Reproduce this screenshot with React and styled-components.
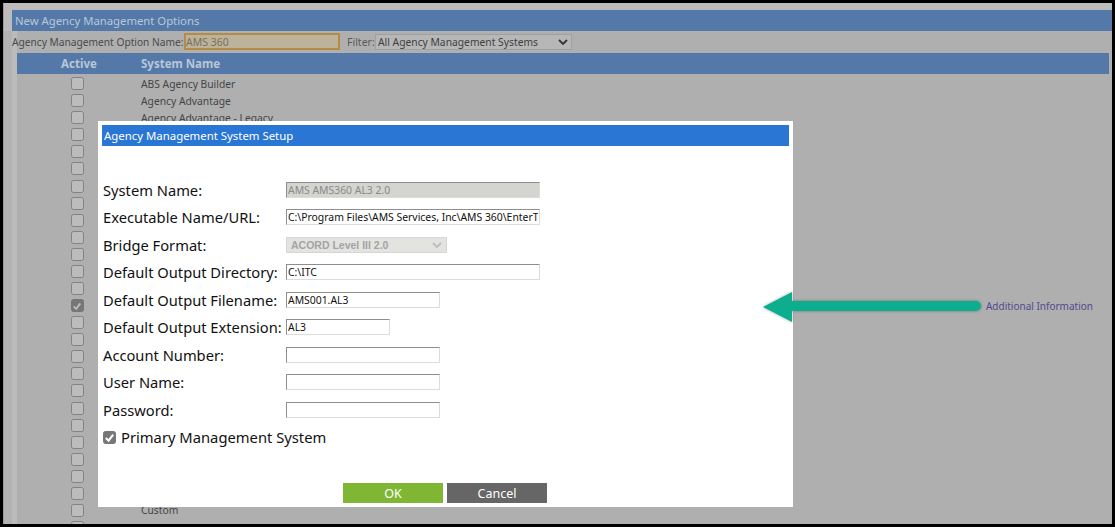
import React from 'react';
import styled, { createGlobalStyle } from 'styled-components';

const Global = createGlobalStyle`
  html, body { margin: 0; padding: 0; background: #000; }
  * { box-sizing: border-box; }
`;
const UI = `"Noto Sans", "Open Sans", sans-serif`;

const Frame = styled.div`
  position: relative; width: 1115px; height: 527px; overflow: hidden;
  background: #000; padding: 3px 3px 3px 3px; font-family: ${UI};
`;
const Page = styled.div`
  height: 100%; overflow: hidden; background: #afafaf;
  display: flex; flex-direction: column;
  border-left: 1px solid #9c9c9c;
`;
const TitleWrap = styled.div`
  flex: none; background: #bcbcbc; padding: 7px 0 0 8px;
`;
const TitleBar = styled.div`
  height: 21px; background: #5479a8; color: #b9c6d8; font-size: 11.3px;
  line-height: 21px; padding-left: 3px;
`;
const Body = styled.div`
  flex: 1; min-height: 0; overflow: hidden;
  background: linear-gradient(to right, #b3b3b3 0 8px, #bbb 8px 13px, #afafaf 13px);
`;
const OptionRow = styled.div`
  height: 22px; display: flex; align-items: center; padding: 0 0 1px 8px;
  color: #4a4a4a; font-size: 10.2px;
`;
const OptionLabel = styled.label` width: 172px; white-space: nowrap; `;
const NameInput = styled.input`
  width: 156px; height: 17px; border: 2px solid #b58c46; background: #bcb39a;
  color: #787060; font: 10.5px ${UI}; padding: 0; outline: none;
`;
const FilterLabel = styled.label` margin-left: 7px; width: 28px; color: #5a5a5a; font-size: 10.5px; `;
const SelectWrap = styled.span`
  position: relative; display: inline-flex;
`;
const Chevron = styled.svg`
  position: absolute; top: 5px; right: ${p => p.$right}px; pointer-events: none;
`;
const FilterSelect = styled.select`
  appearance: none; width: 197px; height: 16px; border: 1px solid #a0a0a0; background: #b7b7b7;
  color: #3f3f3f; font: 10.3px ${UI}; padding: 0 0 0 2px; border-radius: 0; outline: none;
`;
const TableHead = styled.div`
  display: grid; grid-template-columns: 124px 1fr; height: 21px; margin: 0 3px 0 13px;
  background: #5479a8; color: #b9c6d8; font-size: 11.5px; font-weight: 700; line-height: 21px;
`;
const ActiveHead = styled.div` text-align: center; `;
const Rows = styled.div` padding-top: 1px; `;
const Row = styled.div`
  display: grid; grid-template-columns: 124px 1fr auto; align-items: center;
  height: 17.08px; margin: 0 3px 0 13px; color: #454545; font-size: 10.3px;
`;
const BoxCell = styled.div` display: flex; justify-content: center; margin-left: -4px; `;
const Box = styled.span`
  width: 13px; height: 13px; border-radius: 2.5px; display: flex; align-items: center; justify-content: center;
  background: ${p => (p.$on ? '#777' : '#bcbcbc')};
  border: 1px solid ${p => (p.$on ? '#777' : '#828282')};
`;
const Info = styled.a`
  color: #4f4a8f; font-size: 10px; padding: 1px 16px 0 0; text-decoration: none;
`;

const Dialog = styled.div`
  position: absolute; left: 98px; top: 121px; width: 695px; height: 386px;
  background: #fff; padding: 4px 4px 0 4px; display: flex; flex-direction: column;
`;
const DialogHead = styled.div`
  height: 21px; background: #2a76d5; color: #fff; font-size: 11.4px; line-height: 21px; padding-left: 2px;
`;
const Form = styled.div`
  padding: 30px 0 0 1px; display: flex; flex-direction: column; flex: 1;
`;
const FormRow = styled.div`
  height: 27.5px; display: flex; align-items: center; color: #111; font-size: 14.7px;
`;
const FormLabel = styled.label` width: 183px; white-space: nowrap; `;
const Field = styled.input`
  width: ${p => p.$w}px; height: 16px; background: ${p => (p.disabled ? '#d4d4d0' : '#fff')};
  border: 1px solid #dcdcdc; border-top-color: #8e8e8e; border-left-color: #8e8e8e;
  color: ${p => (p.disabled ? '#8a8a8a' : '#111')}; font: 10.4px ${UI}; padding: 0 1px; outline: none;
  opacity: 1;
`;
const BridgeSelect = styled.select`
  appearance: none; width: 161px; height: 16px; background: #e3e3e0; border: 1px solid #d6d6d6; color: #a4a4a4;
  font: 700 10.5px "Liberation Sans", sans-serif; padding: 0 0 0 4px; border-radius: 0; opacity: 1;
`;
const CheckRow = styled.div`
  height: 27.5px; display: flex; align-items: center; gap: 5px; color: #111; font-size: 14.75px;
`;
const Buttons = styled.div`
  display: flex; gap: 4px; margin: auto 0 0 240px; padding-bottom: 4px;
`;
const Btn = styled.button`
  width: 100px; height: 20px; border: none; color: #fff; font: 12.5px ${UI}; padding: 0;
  background: ${p => (p.$ok ? '#7fb735' : '#666')};
`;
const Arrow = styled.svg`
  position: absolute; left: 755px; top: 285px; overflow: visible;
`;

const names = { 0: 'ABS Agency Builder', 1: 'Agency Advantage', 2: 'Agency Advantage - Legacy', 25: 'Custom' };
const rows = Array.from({ length: 27 }, (_, i) => i);

const Check = ({ c, s }) => (
  <svg width={s} height={s} viewBox="0 0 12 12">
    <path d="M2 6.5 L5 9.5 L10 2.8" fill="none" stroke={c} strokeWidth="2.2" />
  </svg>
);

const Chev = ({ c, right }) => (
  <Chevron $right={right} width="10" height="6" viewBox="0 0 10 6">
    <path d="M1 1 L5 5 L9 1" fill="none" stroke={c} strokeWidth="1.8" />
  </Chevron>
);

const fields = [
  ['Executable Name/URL:', 'C:\\Program Files\\AMS Services, Inc\\AMS 360\\EnterT', 254],
  null,
  ['Default Output Directory:', 'C:\\ITC', 254],
  ['Default Output Filename:', 'AMS001.AL3', 154],
  ['Default Output Extension:', 'AL3', 104],
  ['Account Number:', '', 154],
  ['User Name:', '', 154],
  ['Password:', '', 154],
];

export default function App() {
  return (
    <Frame>
      <Global />
      <Page>
        <TitleWrap><TitleBar>New Agency Management Options</TitleBar></TitleWrap>
        <Body>
          <OptionRow>
            <OptionLabel>Agency Management Option Name:</OptionLabel>
            <NameInput defaultValue="AMS 360" />
            <FilterLabel>Filter:</FilterLabel>
            <SelectWrap>
              <FilterSelect defaultValue="all"><option value="all">All Agency Management Systems</option></FilterSelect>
              <Chev c="#333" right={4} />
            </SelectWrap>
          </OptionRow>
          <TableHead><ActiveHead>Active</ActiveHead><div>System Name</div></TableHead>
          <Rows>
            {rows.map(i => (
              <Row key={i}>
                <BoxCell><Box $on={i === 13}>{i === 13 && <Check c="#bdbdbd" s={10} />}</Box></BoxCell>
                <div>{names[i] || ''}</div>
                {i === 13 ? <Info href="#">Additional Information</Info> : <span />}
              </Row>
            ))}
          </Rows>
        </Body>
      </Page>
      <Dialog>
        <DialogHead>Agency Management System Setup</DialogHead>
        <Form>
          <FormRow>
            <FormLabel>System Name:</FormLabel>
            <Field $w={254} disabled defaultValue="AMS AMS360 AL3 2.0" />
          </FormRow>
          {fields.map((f, i) => f ? (
            <FormRow key={i}>
              <FormLabel>{f[0]}</FormLabel>
              <Field $w={f[2]} defaultValue={f[1]} />
            </FormRow>
          ) : (
            <FormRow key={i}>
              <FormLabel>Bridge Format:</FormLabel>
              <SelectWrap>
                <BridgeSelect disabled defaultValue="a"><option value="a">ACORD Level III 2.0</option></BridgeSelect>
                <Chev c="#bdbdbd" right={5} />
              </SelectWrap>
            </FormRow>
          ))}
          <CheckRow>
            <Box $on><Check c="#fff" s={11} /></Box>
            <span>Primary Management System</span>
          </CheckRow>
          <Buttons><Btn $ok>OK</Btn><Btn>Cancel</Btn></Buttons>
        </Form>
      </Dialog>
      <Arrow width="230" height="44" viewBox="0 0 230 44">
        <defs>
          <filter id="s" x="-5%" y="-30%" width="110%" height="160%">
            <feDropShadow dx="0" dy="0" stdDeviation="1.5" floodColor="#000" floodOpacity="0.35" />
          </filter>
        </defs>
        <path filter="url(#s)" fill="#08ae8e"
          d="M8 22 L37 7 L37 16 L221 16 A5 5 0 0 1 221 26 L37 26 L37 37 Z" />
      </Arrow>
    </Frame>
  );
}
